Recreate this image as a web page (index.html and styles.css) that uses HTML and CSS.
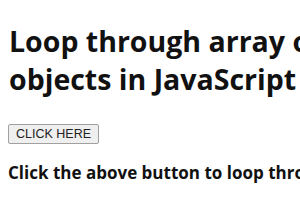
FILE: index.html
```html
<!DOCTYPE html>
<html lang="en">
<head>
    <meta charset="UTF-8">
    <meta name="viewport" content="width=device-width, initial-scale=1.0">
    <title>Loop through array of objects</title>
    <link rel="stylesheet" href="styles.css">
</head>
<body>
    <div class="page">
        <h1 class="title">Loop through array of objects in JavaScript</h1>
        <button class="button" id="loopButton">CLICK HERE</button>
        <h3 class="result" id="result">Click the above button to loop through the array of objects</h3>
    </div>
</body>
</html>
```

FILE: styles.css
```css
html, body {
    margin: 0;
    overflow: hidden;
    background-color: #fff;
}
body {
    padding: 0 8px;
    font-family: "Open Sans", "Noto Sans", sans-serif;
    color: #111;
}
.page {
    width: 350px;
}
.title {
    margin: 22px 0 0 1px;
    font-size: 28.5px;
    line-height: 38px;
    font-weight: 700;
}
.button {
    display: block;
    box-sizing: border-box;
    width: 91px;
    height: 20px;
    margin: 26px 0 0 0;
    padding: 0;
    white-space: nowrap;
    text-align: center;
    font-family: "Liberation Sans", Arial, sans-serif;
    font-size: 12.5px;
    color: #222;
    background-color: #efefef;
    border: 1px solid #a0a0a0;
    border-radius: 2px;
}
.result {
    margin: 17px 0 0 0;
    width: 600px;
    font-size: 17px;
    line-height: 24px;
    font-weight: 700;
}
```
